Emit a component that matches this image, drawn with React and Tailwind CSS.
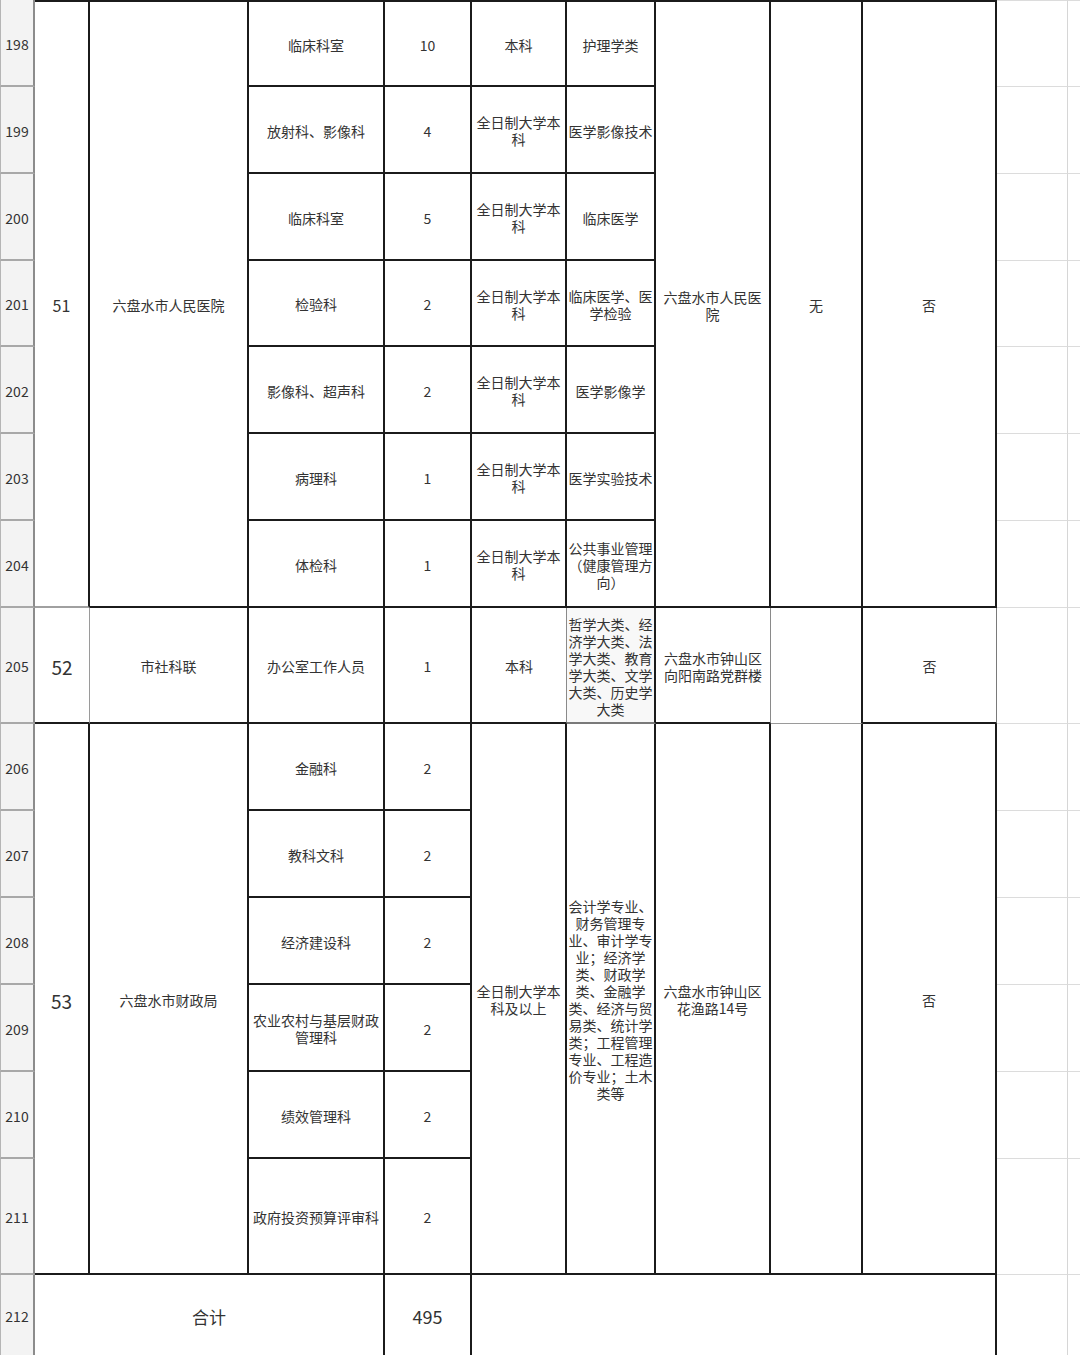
const base = "flex items-center justify-center text-center text-[#333] text-[14px] leading-[17px] whitespace-nowrap pt-[3px] [text-spacing-trim:space-all] [font-feature-settings:'chws'_0,'halt'_0]";
const K = 'border-r-2 border-b-2 border-r-[#1b1b1b] border-b-[#1b1b1b]';
const KT = K + ' border-t-2 border-t-[#1b1b1b]';
const HDR = 'bg-[#f3f3f3] border-l border-l-[#b5b5b5] border-r-2 border-r-[#8c8c8c] border-b-2 border-b-[#a8a8a8] text-[13px] text-[#6a6a6a]';
const X1 = 'border-r border-b border-r-[#d6d6d6] border-b-[#dcdcdc]';
const X2 = 'border-b border-b-[#dcdcdc]';
const X1T = X1 + ' border-t border-t-[#dcdcdc]';
const X2T = X2 + ' border-t border-t-[#dcdcdc]';

const EDU = ['全日制大学本', '科'];

const openParen = <span className="inline-block w-[14px] text-right">（</span>;
const closeParen = <span className="inline-block w-[14px] text-left">）</span>;

const upper = [
  { n: '199', dept: '放射科、影像科', count: '4', edu: EDU, major: ['医学影像技术'] },
  { n: '200', dept: '临床科室', count: '5', edu: EDU, major: ['临床医学'] },
  { n: '201', dept: '检验科', count: '2', edu: EDU, major: ['临床医学、医', '学检验'] },
  { n: '202', dept: '影像科、超声科', count: '2', edu: EDU, major: ['医学影像学'] },
  { n: '203', dept: '病理科', count: '1', edu: EDU, major: ['医学实验技术'] },
  { n: '204', dept: '体检科', count: '1', edu: EDU, major: ['公共事业管理', <>{openParen}健康管理方</>, <>向{closeParen}</>] },
];

const lower = [
  { n: '207', dept: ['教科文科'] },
  { n: '208', dept: ['经济建设科'] },
  { n: '209', dept: ['农业农村与基层财政', '管理科'] },
  { n: '210', dept: ['绩效管理科'] },
  { n: '211', dept: ['政府投资预算评审科'] },
];

const major205 = ['哲学大类、经', '济学大类、法', '学大类、教育', '学大类、文学', '大类、历史学', '大类'];
const major206 = [
  '会计学专业、', '财务管理专', '业、审计学专', '业；经济学', '类、财政学', '类、金融学',
  '类、经济与贸', '易类、统计学', '类；工程管理', '专业、工程造', '价专业；土木', '类等',
];

function Lines({ lines }) {
  return (
    <div>
      {lines.map((l, i) => <div key={i}>{l}</div>)}
    </div>
  );
}

function Cell({ className = '', lines, children }) {
  return (
    <div className={`${base} ${className}`}>
      {lines ? <Lines lines={lines} /> : children}
    </div>
  );
}

function Extras({ top }) {
  return (
    <>
      <div className={top ? X1T : X1} />
      <div className={top ? X2T : X2} />
    </>
  );
}

export default function App() {
  return (
    <div className="w-[1080px] h-[1355px] overflow-hidden bg-white font-['Noto_Sans_CJK_SC','Noto_Sans',sans-serif]">
      <div className="grid grid-cols-[35px_55px_159px_136px_87px_95px_89px_115px_92px_134px_71px_12px] grid-rows-[87px_87px_87px_86px_87px_87px_87px_116px_87px_87px_87px_87px_87px_116px_80px]">
        {/* 198 */}
        <Cell className={HDR}>198</Cell>
        <Cell className="row-span-7 text-[16px] border-t-2 border-t-[#1b1b1b] border-r-2 border-r-[#1b1b1b] border-b-2 border-b-[#a0a0a0]">51</Cell>
        <Cell className={'row-span-7 ' + KT}>六盘水市人民医院</Cell>
        <Cell className={KT}>临床科室</Cell>
        <Cell className={KT}>10</Cell>
        <Cell className={KT}>本科</Cell>
        <Cell className={KT}>护理学类</Cell>
        <Cell className={'row-span-7 ' + KT} lines={['六盘水市人民医', '院']} />
        <Cell className={'row-span-7 ' + KT}>无</Cell>
        <Cell className={'row-span-7 ' + KT}>否</Cell>
        <Extras top />

        {/* 199 - 204 */}
        {upper.map(r => (
          <div key={r.n} className="contents">
            <Cell className={HDR}>{r.n}</Cell>
            <Cell className={K}>{r.dept}</Cell>
            <Cell className={K}>{r.count}</Cell>
            <Cell className={K} lines={r.edu} />
            <Cell className={K} lines={r.major} />
            <Extras />
          </div>
        ))}

        {/* 205 */}
        <Cell className={HDR}>205</Cell>
        <Cell className="text-[19px] border-r border-r-[#9a9a9a] border-b-2 border-b-[#1b1b1b]">52</Cell>
        <Cell className={K}>市社科联</Cell>
        <Cell className={K}>办公室工作人员</Cell>
        <Cell className={K}>1</Cell>
        <Cell className="border-r border-r-[#8a8a8a] border-b-2 border-b-[#1b1b1b]">本科</Cell>
        <Cell className="bg-[#f8f8f8] leading-[16.6px] border-r-2 border-r-[#1b1b1b] border-b-2 border-b-[#7a7a7a]" lines={major205} />
        <Cell className="border-r border-r-[#8a8a8a] border-b-2 border-b-[#1b1b1b]" lines={['六盘水市钟山区', '向阳南路党群楼']} />
        <Cell className="border-r-2 border-r-[#1b1b1b] border-b border-b-[#9a9a9a]" />
        <Cell className="text-[11px] border-r border-r-[#7a7a7a] border-b-2 border-b-[#1b1b1b]">否</Cell>
        <Extras />

        {/* 206 */}
        <Cell className={HDR}>206</Cell>
        <Cell className={'row-span-6 text-[19px] ' + K}>53</Cell>
        <Cell className={'row-span-6 ' + K}>六盘水市财政局</Cell>
        <Cell className={K}>金融科</Cell>
        <Cell className={K}>2</Cell>
        <Cell className={'row-span-6 ' + K} lines={['全日制大学本', '科及以上']} />
        <Cell className={'row-span-6 leading-[16.5px] ' + K} lines={major206} />
        <Cell className={'row-span-6 ' + K} lines={['六盘水市钟山区', '花渔路14号']} />
        <Cell className={'row-span-6 ' + K} />
        <Cell className={'row-span-6 ' + K}>否</Cell>
        <Extras />

        {/* 207 - 211 */}
        {lower.map(r => (
          <div key={r.n} className="contents">
            <Cell className={HDR}>{r.n}</Cell>
            <Cell className={K} lines={r.dept} />
            <Cell className={K}>2</Cell>
            <Extras />
          </div>
        ))}

        {/* 212 */}
        <Cell className="bg-[#f3f3f3] border-l border-l-[#b5b5b5] border-r-2 border-r-[#8c8c8c] text-[13px] text-[#6a6a6a]">212</Cell>
        <Cell className="col-span-3 text-[17px] border-r-2 border-r-[#1b1b1b]">合计</Cell>
        <Cell className="text-[18px] border-r-2 border-r-[#1b1b1b]">495</Cell>
        <Cell className="col-span-5 border-r-2 border-r-[#1b1b1b]" />
        <div className="border-r border-r-[#d6d6d6]" />
        <div />
      </div>
    </div>
  );
}
